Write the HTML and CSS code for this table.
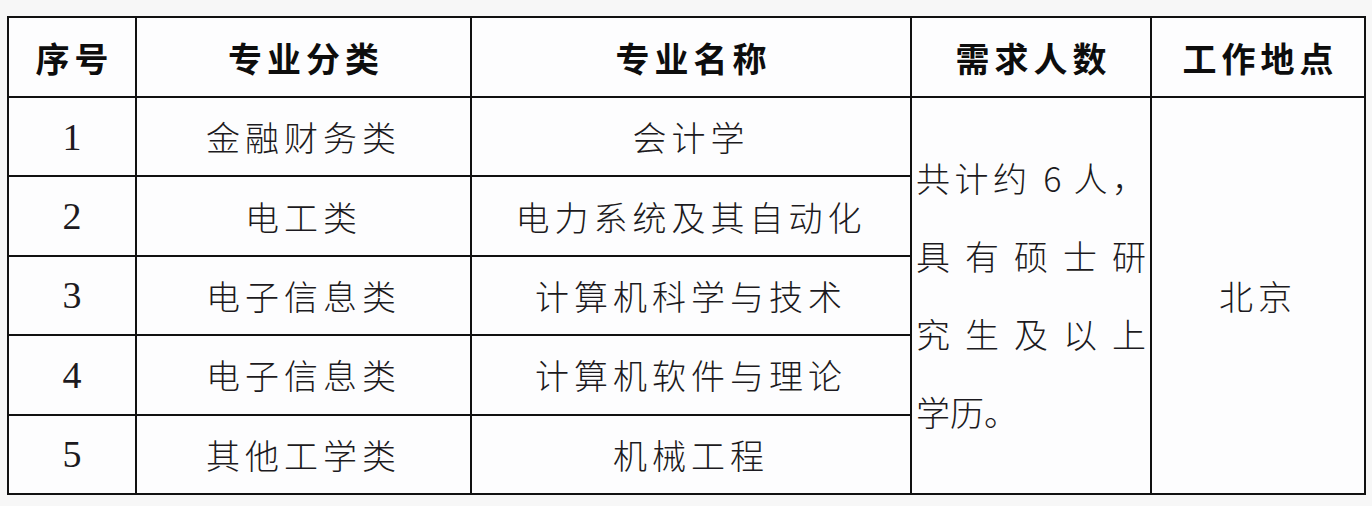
FILE: index.html
```html
<!DOCTYPE html>
<html lang="zh-CN">
<head>
<meta charset="utf-8">
<title>招聘需求表</title>
<link rel="stylesheet" href="styles.css">
</head>
<body>
<table class="grid">
  <colgroup>
    <col class="c1"><col class="c2"><col class="c3"><col class="c4"><col class="c5">
  </colgroup>
  <thead>
    <tr class="head">
      <th>序号</th>
      <th>专业分类</th>
      <th>专业名称</th>
      <th>需求人数</th>
      <th>工作地点</th>
    </tr>
  </thead>
  <tbody>
    <tr class="row">
      <td class="num">1</td>
      <td class="txt">金融财务类</td>
      <td class="txt">会计学</td>
      <td class="merged" rowspan="5">
        <div class="jl">共计约 6 人，</div>
        <div class="jl">具有硕士研</div>
        <div class="jl">究生及以上</div>
        <div class="ll">学历。</div>
      </td>
      <td class="txt" rowspan="5">北京</td>
    </tr>
    <tr class="row">
      <td class="num">2</td>
      <td class="txt">电工类</td>
      <td class="txt">电力系统及其自动化</td>
    </tr>
    <tr class="row">
      <td class="num">3</td>
      <td class="txt">电子信息类</td>
      <td class="txt">计算机科学与技术</td>
    </tr>
    <tr class="row">
      <td class="num">4</td>
      <td class="txt">电子信息类</td>
      <td class="txt">计算机软件与理论</td>
    </tr>
    <tr class="row">
      <td class="num">5</td>
      <td class="txt">其他工学类</td>
      <td class="txt">机械工程</td>
    </tr>
  </tbody>
</table>
</body>
</html>
```
FILE: styles.css
```css
html, body {
  margin: 0;
  padding: 0;
  background: #f7f7f7;
}
body {
  padding: 16px 0 0 7px;
}
.grid {
  border-collapse: collapse;
  table-layout: fixed;
  width: 1357px;
  background: #fdfdfe;
  color: #1c1a20;
  font-family: "Noto Sans CJK SC", "Noto Sans", sans-serif;
}
.c1 { width: 128px; }
.c2 { width: 335px; }
.c3 { width: 440px; }
.c4 { width: 240px; }
.c5 { width: 214px; }
.grid th, .grid td {
  border: 2px solid #111;
  padding: 0;
  text-align: center;
  vertical-align: middle;
}
.head { height: 80px; }
.row { height: 79.4px; }
.grid th {
  font-size: 34px;
  font-weight: 700;
  letter-spacing: 5px;
  padding-left: 5px;
  color: #0d0d0d;
}
.txt {
  font-size: 34px;
  font-weight: 300;
  letter-spacing: 5px;
  padding-left: 5px;
}
.num {
  font-family: "Liberation Serif", "Times New Roman", serif;
  font-size: 38px;
}
.grid td.merged {
  text-align: left;
  padding: 0 4px 0 4px;
  font-size: 34px;
  font-weight: 300;
  line-height: 78px;
}
.jl {
  text-align: justify;
  text-align-last: justify;
}
.ll {
  text-align: left;
}
```
